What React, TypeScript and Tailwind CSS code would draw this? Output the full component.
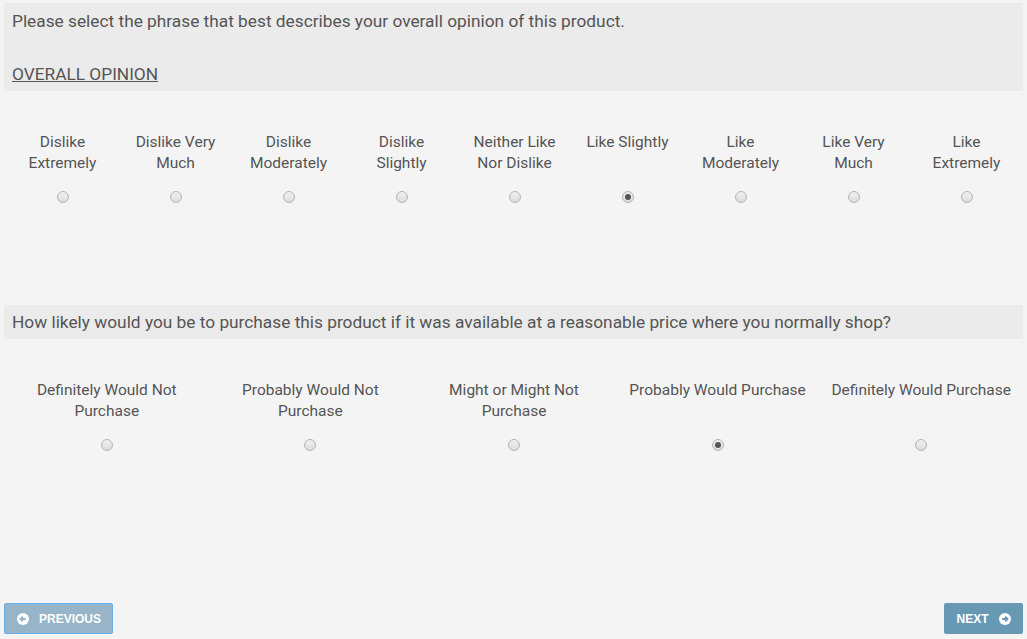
import React from 'react';

const opinions = [
  ['Dislike', 'Extremely'],
  ['Dislike Very', 'Much'],
  ['Dislike', 'Moderately'],
  ['Dislike', 'Slightly'],
  ['Neither Like', 'Nor Dislike'],
  ['Like Slightly'],
  ['Like', 'Moderately'],
  ['Like Very', 'Much'],
  ['Like', 'Extremely'],
];

const purchase = [
  ['Definitely Would Not', 'Purchase'],
  ['Probably Would Not', 'Purchase'],
  ['Might or Might Not', 'Purchase'],
  ['Probably Would Purchase'],
  ['Definitely Would Purchase'],
];

function Radio({ checked }: { checked?: boolean }) {
  return (
    <span className="flex h-[12px] w-[12px] items-center justify-center rounded-full border border-[#b4b4b4] bg-gradient-to-b from-[#f0f0f0] to-[#dcdcdc]">
      {checked && <span className="h-[6px] w-[6px] rounded-full bg-[#555]" />}
    </span>
  );
}

function Choice({ lines, checked }: { lines: string[]; checked?: boolean }) {
  return (
    <div className="flex flex-col items-center">
      <div className="h-[42px] whitespace-nowrap text-center text-[15.5px] leading-[21px] text-[#555]">
        {lines.map((l) => (
          <div key={l}>{l}</div>
        ))}
      </div>
      <div className="mt-[17px]">
        <Radio checked={checked} />
      </div>
    </div>
  );
}

function CircleArrow({ dir }: { dir: 'left' | 'right' }) {
  return (
    <svg width="12" height="12" viewBox="0 0 12 12">
      <circle cx="6" cy="6" r="6" fill="white" />
      {dir === 'left' ? (
        <path d="M8.8 6H3.6M5.8 3.6L3.4 6l2.4 2.4" stroke="#97b4c8" strokeWidth="1.8" fill="none" />
      ) : (
        <path d="M3.2 6h5.2M6.2 3.6L8.6 6 6.2 8.4" stroke="#6899b4" strokeWidth="1.8" fill="none" />
      )}
    </svg>
  );
}

export default function App(): React.JSX.Element {
  return (
    <div className="flex min-h-[639px] flex-col bg-[#f4f4f4] px-[4px] pt-[3px] font-['Roboto',sans-serif] text-[#555]">
      <section className="bg-[#ebebeb] px-[8px] pb-[6px] pt-[7px] text-[17.3px] leading-[22px]">
        <p>Please select the phrase that best describes your overall opinion of this product.</p>
        <p className="mt-[31px] underline">OVERALL OPINION</p>
      </section>

      <div className="mt-[41px] grid grid-cols-9 pl-[2px]">
        {opinions.map((o, i) => (
          <Choice key={i} lines={o} checked={i === 5} />
        ))}
      </div>

      <section className="mt-[102px] bg-[#ebebeb] px-[8px] py-[6px] text-[17.3px] leading-[22px]">
        <p>How likely would you be to purchase this product if it was available at a reasonable price where you normally shop?</p>
      </section>

      <div className="mt-[41px] grid grid-cols-5 pl-[1px]">
        {purchase.map((o, i) => (
          <Choice key={i} lines={o} checked={i === 3} />
        ))}
      </div>

      <div className="mt-auto flex justify-between pb-[5px]">
        <button className="flex h-[31px] w-[109px] items-center gap-[10px] rounded-[2px] border border-[#66b0f0] bg-[#97b4c8] pl-[12px] font-['Liberation_Sans',sans-serif] text-[12px] font-bold text-white">
          <CircleArrow dir="left" />
          PREVIOUS
        </button>
        <button className="flex h-[31px] w-[79px] items-center justify-center gap-[10px] rounded-[2px] bg-[#6899b4] font-['Liberation_Sans',sans-serif] text-[12px] font-bold text-white">
          NEXT
          <CircleArrow dir="right" />
        </button>
      </div>
    </div>
  );
}
